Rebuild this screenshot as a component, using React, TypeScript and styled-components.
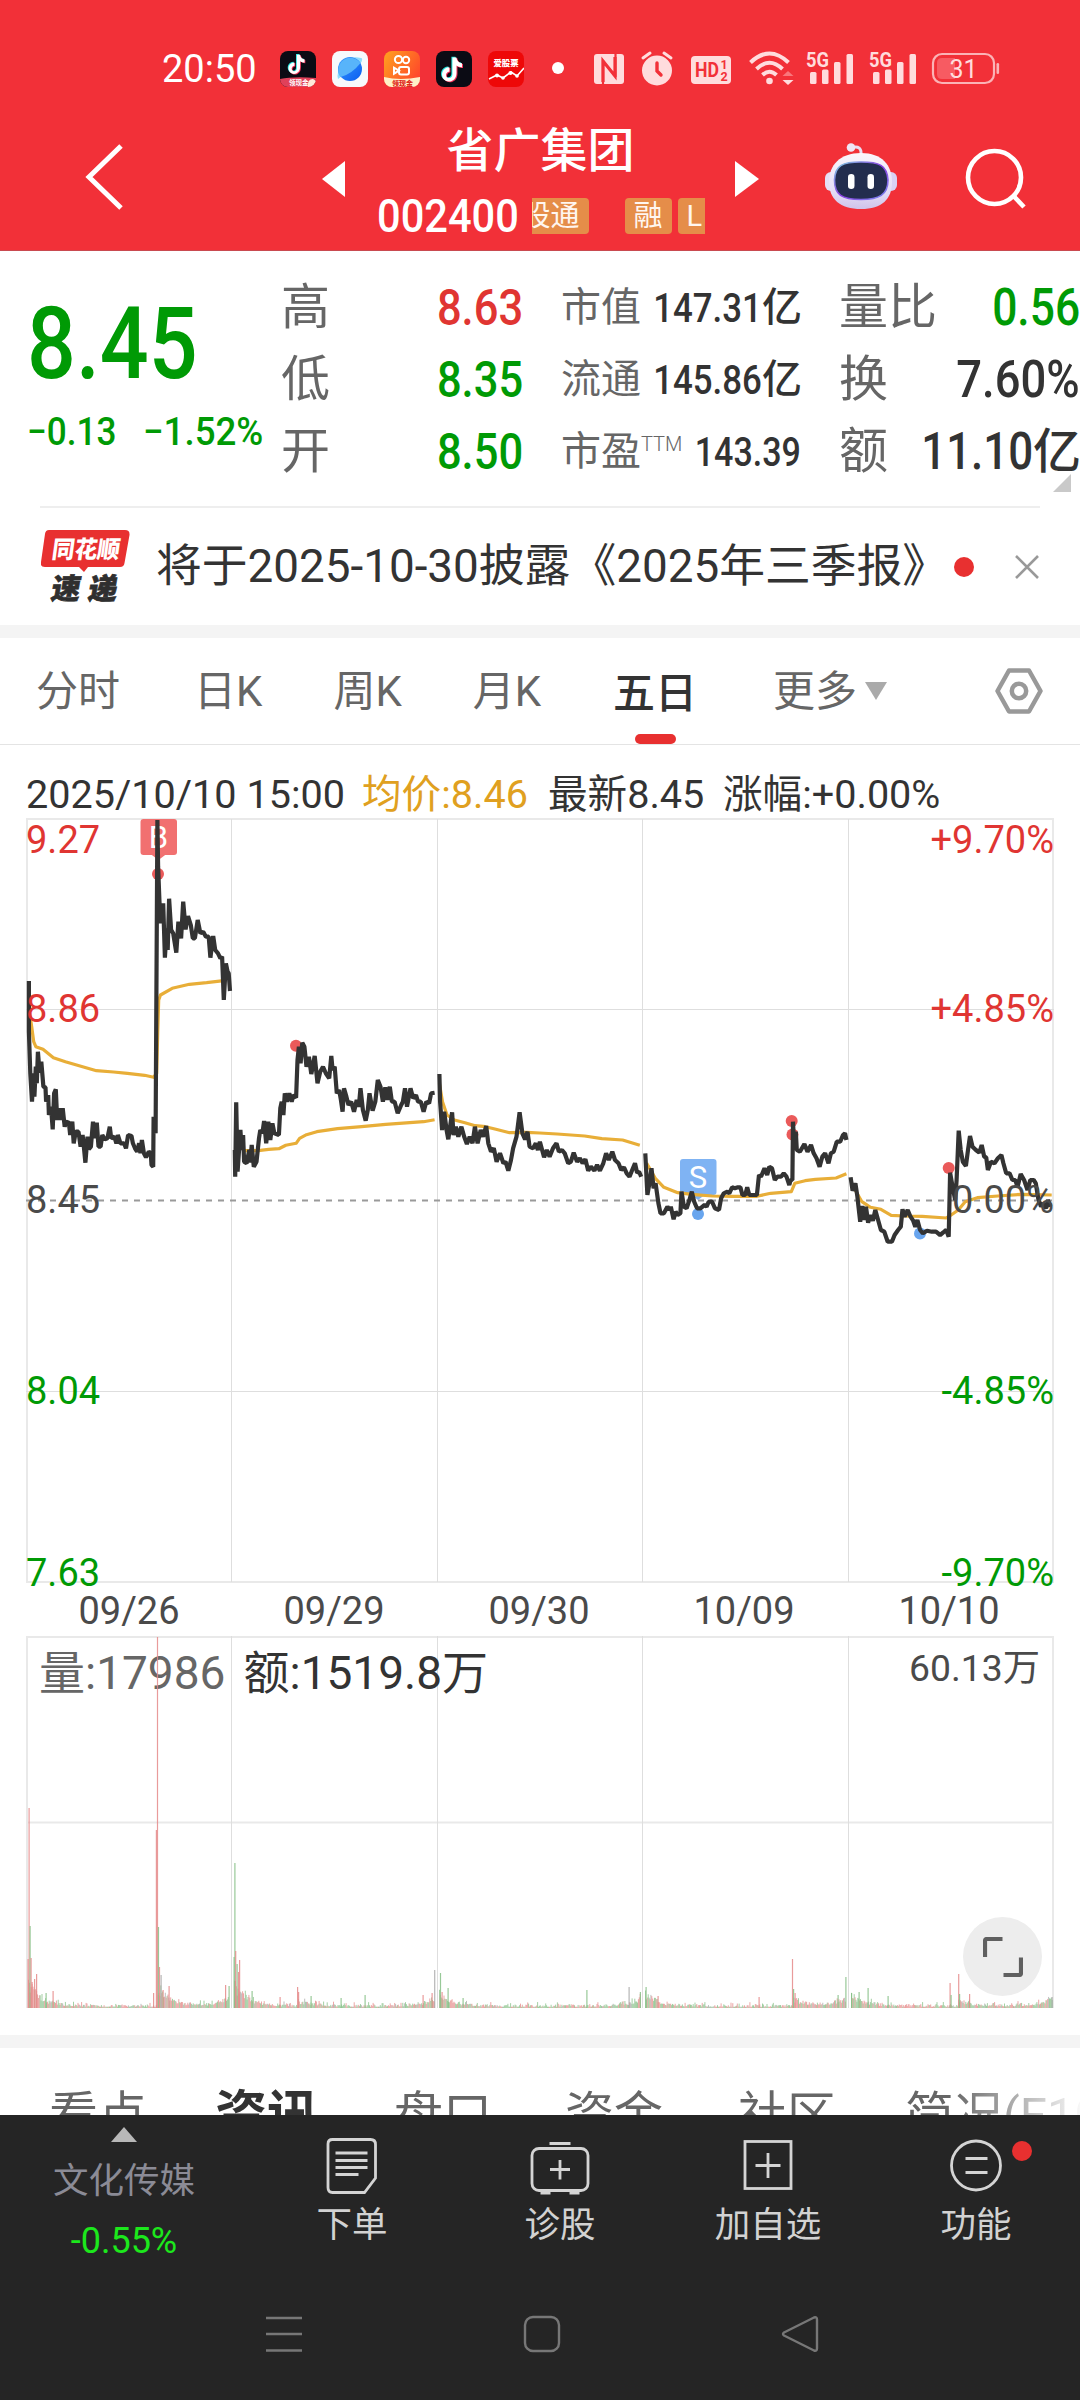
import React from "react";
import styled, { createGlobalStyle } from "styled-components";

const FONT = `Roboto, "Noto Sans CJK SC", sans-serif`;
const RED = "#f23038";
const UP = "#e03532";
const DOWN = "#009a05";
const INK = "#333333";

const Global = createGlobalStyle`
  * { box-sizing: border-box; }
  body { margin: 0; background: #fff; font-family: ${FONT}; color: ${INK}; }
  svg { display: block; flex: none; }
`;

const Screen = styled.div`
  width: 1080px;
  height: 2400px;
  overflow: hidden;
  display: flex;
  flex-direction: column;
  background: #fff;
  white-space: nowrap;
`;

/* ---------- status bar ---------- */
const StatusBar = styled.div`
  height: 100px;
  padding: 36px 0 0 162px;
  background: ${RED};
  display: flex;
  align-items: flex-start;
`;
const Clock = styled.div`
  width: 118px;
  font-size: 38px;
  line-height: 66px;
  color: #fff;
`;
const AppIcons = styled.div`
  display: flex;
  gap: 16px;
  padding-top: 15px;
  width: 272px;
`;
const SystemIcons = styled.div`
  display: flex;
  padding-top: 12px;
`;

/* ---------- title bar ---------- */
const TitleBar = styled.div`
  height: 151px;
  background: ${RED};
  border-bottom: 1px solid #c94a50;
  display: grid;
  grid-template-columns: 322px 24px 389px 24px 66px 72px 183px;
  align-items: start;
`;
const Slot = styled.div<{ $top: number; $left?: number }>`
  padding-top: ${(p) => p.$top}px;
  padding-left: ${(p) => p.$left ?? 0}px;
`;
const TitleBlock = styled.div`
  display: flex;
  flex-direction: column;
  align-items: center;
  padding-top: 18px;
`;
const StockName = styled.div`
  font-size: 47px;
  font-weight: 500;
  line-height: 66px;
  color: #fff;
`;
const CodeRow = styled.div`
  display: flex;
  align-items: center;
  height: 64px;
  width: 328px;
  gap: 15px;
`;
const StockCode = styled.div`
  width: 140px;
  color: #fff;
  font-size: 47px;
  line-height: 64px;
  font-weight: 500;
`;
const TagStrip = styled.div`
  display: flex;
  width: 173px;
  overflow: hidden;
`;
const Tag = styled.div<{ $ml?: number; $w?: number }>`
  flex: none;
  height: 36px;
  line-height: 36px;
  padding: 0 9px;
  border-radius: 4px;
  background: #e58d49;
  color: #fff6f0;
  font-size: 29px;
  margin-left: ${(p) => p.$ml ?? 0}px;
  ${(p) => (p.$w ? `width: ${p.$w}px;` : "")}
`;
const Squeeze = styled.span<{ $k: number; $right?: boolean }>`
  display: inline-block;
  transform: scaleX(${(p) => p.$k});
  transform-origin: ${(p) => (p.$right ? "100%" : "0")} 50%;
`;

/* ---------- quote panel ---------- */
const Quote = styled.div`
  height: 255px;
  display: grid;
  grid-template-columns: 281px 242px 38px 240px 38px 241px;
`;
const PriceCol = styled.div`
  padding-left: 27px;
  color: ${DOWN};
`;
const Price = styled.div`
  margin-top: 33px;
  height: 121px;
  line-height: 120px;
  font-size: 100px;
  font-weight: 500;
`;
const Change = styled.div`
  display: flex;
  height: 54px;
  line-height: 54px;
  font-size: 39px;
  font-weight: 500;
  & > div:first-child { width: 116px; }
`;
const StatCol = styled.div<{ $start: number }>`
  grid-column-start: ${(p) => p.$start};
  padding-top: 21px;
`;
const Stat = styled.div`
  height: 72px;
  line-height: 72px;
  display: flex;
  justify-content: space-between;
`;
const StatLabel = styled.div<{ $size: number }>`
  color: #666;
  font-size: ${(p) => p.$size}px;
  display: flex;
`;
const Superscript = styled.span`
  font-size: 20px;
  line-height: 56px;
  font-weight: 300;
`;
const StatValue = styled.div<{ $size: number; $color: string }>`
  width: 0;
  display: flex;
  justify-content: flex-end;
  font-size: ${(p) => p.$size}px;
  font-weight: 500;
  color: ${(p) => p.$color};
`;
const Unit = styled.span<{ $size: number }>`
  font-size: ${(p) => p.$size}px;
  margin-right: -1px;
`;
const CornerHolder = styled.div`
  display: flex;
  justify-content: flex-end;
  padding-right: 9px;
  margin-top: -14px;
`;
const Hairline = styled.div`
  height: 2px;
  margin: 0 40px;
  background: #eeeeee;
`;

/* ---------- news ---------- */
const News = styled.div`
  height: 117px;
  padding-left: 41px;
  display: flex;
  align-items: center;
`;
const NewsText = styled.div`
  width: 798px;
  padding-left: 25px;
  font-size: 45.8px;
  line-height: 60px;
`;
const Dot = styled.div<{ $size: number; $color?: string; $ml?: number }>`
  width: ${(p) => p.$size}px;
  height: ${(p) => p.$size}px;
  margin-left: ${(p) => p.$ml ?? 0}px;
  border-radius: 50%;
  background: ${(p) => p.$color ?? "#e83030"};
  flex: none;
`;
const CloseIcon = styled.svg`
  margin-left: 41px;
`;
const Band = styled.div`
  height: 13px;
  background: #f4f4f4;
  flex: none;
`;

/* ---------- period tabs ---------- */
const Tabs = styled.div`
  height: 107px;
  padding-left: 36px;
  display: flex;
  gap: 71px;
  border-bottom: 1px solid #e4e4e4;
`;
const Tab = styled.div<{ $active?: boolean; $ml?: number }>`
  height: 106px;
  line-height: 111px;
  font-size: 42px;
  margin-left: ${(p) => p.$ml ?? 0}px;
  color: ${(p) => (p.$active ? INK : "#666")};
  font-weight: ${(p) => (p.$active ? 500 : 400)};
  display: flex;
  flex-direction: ${(p) => (p.$active ? "column" : "row")};
  align-items: center;
  gap: ${(p) => (p.$active ? 0 : 8)}px;
`;
const ActiveMark = styled.div`
  width: 41px;
  height: 10px;
  border-radius: 5px;
  background: #e83030;
  margin-top: -15px;
`;

/* ---------- chart ---------- */
const InfoLine = styled.div`
  height: 74px;
  padding: 15px 0 0 26px;
  display: flex;
  font-size: 39.6px;
  line-height: 70px;
`;
const Info = styled.div<{ $w: number; $color?: string }>`
  width: ${(p) => p.$w}px;
  color: ${(p) => p.$color ?? INK};
`;
const ChartWrap = styled.div`
  position: relative;
  height: 1216px;
`;
const Plot = styled.svg`
  overflow: visible;
`;
const Expand = styled.button`
  position: absolute;
  left: 963px;
  top: 1098px;
  width: 79px;
  height: 79px;
  border: 0;
  padding: 0;
  border-radius: 50%;
  background: #ededed;
  display: grid;
  place-items: center;
`;

/* ---------- section tabs ---------- */
const Sections = styled.div`
  position: relative;
  height: 67px;
  flex: none;
  overflow: hidden;
  padding-left: 49px;
  display: flex;
  gap: 73px;
  line-height: 136px;
`;
const Section = styled.div<{ $active?: boolean; $ml?: number }>`
  margin-left: ${(p) => p.$ml ?? 0}px;
  font-size: ${(p) => (p.$active ? 52 : 49)}px;
  color: ${(p) => (p.$active ? INK : "#666")};
  font-weight: ${(p) => (p.$active ? 700 : 400)};
`;
const Fade = styled.div`
  position: absolute;
  right: 0;
  top: 0;
  width: 130px;
  height: 67px;
  background: linear-gradient(90deg, rgba(255, 255, 255, 0), rgba(255, 255, 255, 0.95));
`;

/* ---------- bottom bars ---------- */
const ActionBar = styled.div`
  height: 165px;
  flex: none;
  background: #252525;
  display: grid;
  grid-template-columns: 248px 208px 208px 208px 208px;
`;
const Sector = styled.div`
  display: flex;
  flex-direction: column;
  align-items: center;
  padding-top: 12px;
`;
const SectorName = styled.div`
  margin-top: 12px;
  font-size: 35.5px;
  line-height: 54px;
  color: #8b8b96;
`;
const SectorChange = styled.div`
  font-size: 36px;
  line-height: 66px;
  color: #1ce81c;
`;
const Action = styled.div`
  position: relative;
  display: flex;
  flex-direction: column;
  align-items: center;
  padding-top: 21px;
`;
const ActionLabel = styled.div`
  margin-top: 5px;
  font-size: 35.5px;
  line-height: 48px;
  color: #d2d2d2;
`;
const Badge = styled.div`
  position: absolute;
  left: 140px;
  top: 26px;
`;
const NavBar = styled.div`
  height: 120px;
  flex: none;
  background: #252525;
  display: flex;
  justify-content: center;
  gap: 218px;
  padding: 34px 0 0 3px;
`;

/* ---------- icons ---------- */
const NOTE = "M19.4 6.5c.5 3.3 2.4 5.4 5.6 5.8v4c-2.100.1-3.900-.6-5.500-1.700v7.400c0 9-9.700 11-13.300 5.500-2.800-4.600-.4-11.100 6.200-11.300v4.200c-4.200.4-4.500 6.300-.7 6.700 2.400.2 3.700-1.500 3.700-3.900V6.500z";

const TikTok = ({ ribbon, id }: { ribbon?: boolean; id: string }) => (
  <svg width="36" height="36" viewBox="0 0 36 36">
    <clipPath id={id}><rect width="36" height="36" rx="8" /></clipPath>
    <g clipPath={`url(#${id})`}>
      <rect width="36" height="36" fill="#0b0b14" />
      <g transform={ribbon ? "translate(4.500 -1.500) scale(.8)" : "translate(1 0)"}>
        <path d={NOTE} fill="#25e6e0" transform="translate(-1 -.8)" />
        <path d={NOTE} fill="#f23058" transform="translate(1 .8)" />
        <path d={NOTE} fill="#fff" />
      </g>
      {ribbon && (
        <>
          <path d="M0 28Q14 25 36 27V36H0Z" fill="#e0415a" />
          <path d="M28 36Q27 28 33 28L36 30V36Z" fill="#ffe9d8" />
          <text x="9" y="34" fontSize="6.500" fontWeight="700" fill="#fff">领现金</text>
        </>
      )}
    </g>
  </svg>
);
const Planet = () => (
  <svg width="36" height="36" viewBox="0 0 36 36">
    <defs>
      <linearGradient id="pl" x1="0" y1="0" x2="1" y2="1">
        <stop offset="0" stopColor="#3a9cff" /><stop offset="1" stopColor="#0a5cf0" />
      </linearGradient>
    </defs>
    <rect width="36" height="36" rx="8" fill="#f7f9fc" />
    <path d="M6 28Q4 22 10 13Q17 4 29 7Q31 7 29.500 11Z" fill="#8fdcfb" />
    <circle cx="18" cy="18" r="12" fill="url(#pl)" />
    <path d="M8.500 26A12 12 0 1 1 28.500 12Q20 23 8.500 26Z" fill="#58b4fa" />
  </svg>
);
const Kuaishou = () => (
  <svg width="36" height="36" viewBox="0 0 36 36">
    <defs>
      <linearGradient id="ks" x1="0" y1="0" x2="1" y2=".6">
        <stop offset="0" stopColor="#ffa21f" /><stop offset="1" stopColor="#ff4a2a" />
      </linearGradient>
      <clipPath id="ksc"><rect width="36" height="36" rx="8" /></clipPath>
    </defs>
    <g clipPath="url(#ksc)">
      <rect width="36" height="36" fill="url(#ks)" />
      <g fill="none" stroke="#fff" strokeWidth="2">
        <circle cx="14.500" cy="8.500" r="3.600" /><circle cx="22" cy="9" r="3.200" />
        <rect x="15" y="16" width="10" height="7.500" rx="2" /><path d="M15 19.700l-5-3v6z" />
      </g>
      <path d="M0 26Q16 30 36 26V36H0Z" fill="#fff0c8" />
      <text x="8" y="34.500" fontSize="7" fontWeight="900" fill="#e02a20">领现金</text>
    </g>
  </svg>
);
const StockApp = () => (
  <svg width="36" height="36" viewBox="0 0 36 36">
    <rect width="36" height="36" rx="8" fill="#ee0808" />
    <text x="5.500" y="15" fontSize="8.400" fontWeight="900" fill="#fff">爱股票</text>
    <path d="M1 28L9 24L15 27L23 21L29 25L36 17" fill="none" stroke="#fff" strokeWidth="1.600" />
    <g fill="#fff"><circle cx="9" cy="24.500" r="2" /><circle cx="15" cy="27" r="1.800" /><circle cx="22.500" cy="22" r="2" /><circle cx="29" cy="25" r="1.800" /></g>
  </svg>
);
const PALE = "#ffdcdd";
const Signal = ({ x }: { x: number }) => (
  <g transform={`translate(${x} 0)`}>
    <text x="-1" y="19" fontSize="20" fontWeight="700" textLength="23" lengthAdjust="spacingAndGlyphs">5G</text>
    <rect x="3" y="24" width="6.500" height="12" rx="1.500" />
    <rect x="15" y="21.500" width="6.500" height="14.500" rx="1.500" />
    <rect x="27" y="14" width="6.500" height="22" rx="1.500" />
    <rect x="39.500" y="6" width="6.500" height="30" rx="1.500" />
  </g>
);
const SystemGlyphs = () => (
  <svg width="460" height="42" viewBox="0 0 460 42" fill={PALE}>
    <circle cx="6" cy="20" r="6" fill="#fff" />
    {/* NFC */}
    <rect x="42" y="6" width="30" height="30" rx="3" />
    <g fill="none" stroke={RED} strokeWidth="3.200">
      <path d="M51 34V13L63 28V9" /><path d="M51 12V36M63.500 6V29" strokeWidth="2.200" />
    </g>
    {/* alarm */}
    <circle cx="105" cy="22.500" r="15" />
    <g fill="none" strokeLinecap="round"><path d="M91 10L98 5M119 10L112 5" stroke={PALE} strokeWidth="3" />
      <path d="M105 15V23L109 27" stroke={RED} strokeWidth="3.400" /></g>
    {/* HD */}
    <rect x="139" y="8" width="40" height="28" rx="4" />
    <g fill={RED} fontWeight="700">
      <text x="143" y="29" fontSize="21" textLength="24" lengthAdjust="spacingAndGlyphs">HD</text>
      <text x="168.500" y="20.500" fontSize="12.500">1</text><text x="168.500" y="32.500" fontSize="12.500">2</text>
    </g>
    {/* wifi */}
    <g fill="none" stroke={PALE} strokeWidth="4">
      <path d="M198.500 14.500Q217.500 -3.500 236.500 14.500" /><path d="M204.500 21Q217.500 8.500 230.500 21" /><path d="M210.500 27Q217.500 20.500 224.500 27" />
    </g>
    <circle cx="217.500" cy="33" r="3.300" />
    <path d="M230.500 28L236 23L241.500 28Z" fill="#f9767b" /><path d="M230.500 32L236 37L241.500 32Z" />
    <Signal x={255} />
    <Signal x={318} />
    <rect x="381" y="6" width="61" height="29" rx="9" fill="none" stroke="#fbb3b6" strokeWidth="2.200" />
    <path d="M390 10H403V31H390Q385 31 385 26V15Q385 10 390 10Z" fill="#f75b62" />
    <rect x="444.500" y="15" width="2.600" height="11" rx="1.300" fill="#fbb3b6" />
    <text x="411.500" y="29.500" textAnchor="middle" fontSize="25" letterSpacing="0">31</text>
  </svg>
);
const Robot = () => (
  <svg width="72" height="68" viewBox="0 0 72 68">
    <defs>
      <linearGradient id="hd" x1="0" y1="0" x2="0" y2="1"><stop offset="0" stopColor="#fbf6fb" /><stop offset=".7" stopColor="#e4dcf6" /><stop offset="1" stopColor="#cfc4ea" /></linearGradient>
      <linearGradient id="rm" x1="0" y1="0" x2="1" y2="1"><stop offset="0" stopColor="#7fd0e0" /><stop offset=".5" stopColor="#8a3fe0" /><stop offset="1" stopColor="#7b8cf0" /></linearGradient>
    </defs>
    <path d="M36 12Q37 2 27 4.500" fill="none" stroke="#e9def2" strokeWidth="3" />
    <circle cx="26" cy="4.500" r="4.300" fill="#efe6f6" />
    <rect x="0" y="29" width="14" height="19" rx="6" fill="#e5def6" /><rect x="58" y="29" width="14" height="19" rx="6" fill="#d9d2f4" />
    <path d="M36 10C57 10 67 22 67 39C67 56 57 66 36 66C15 66 4 56 4 39C4 22 15 10 36 10Z" fill="url(#hd)" />
    <path d="M36 19C54 19 62 22 63 37C63 52 54 56.500 36 56.500C17 56.500 9.500 52 9.500 37C10 22 18 19 36 19Z" fill="#232d4e" stroke="url(#rm)" strokeWidth="1.600" />
    <rect x="23" y="31" width="6.500" height="15" rx="3.200" fill="#fff" /><rect x="42.500" y="31" width="6.500" height="15" rx="3.200" fill="#fff" />
  </svg>
);
const NewsLogo = () => (
  <svg width="90" height="74" viewBox="0 0 90 74">
    <path d="M8 0H84Q89 0 88.500 5L83.500 33Q83 37 79 37H47L43 42L38 37H4Q-1 37 0 32L4 4Q4.500 0 8 0Z" fill="#e83030" />
    <g fontWeight="900">
      <text transform="translate(10 28) skewX(-8)" fontSize="24" fill="#fff" textLength="68" lengthAdjust="spacingAndGlyphs">同花顺</text>
      <text transform="translate(9 68.500) skewX(-10)" fontSize="29" fill="#2f2f2f" stroke="#2f2f2f" strokeWidth=".7" textLength="66">速递</text>
    </g>
  </svg>
);

/* ---------- chart data ---------- */
// Plot samples use a fine grid: 2.904 units per pixel across, 3 down.
type Trace = { ox: number; oy: number; d: string };
const PRICE: Trace[] = [
  { ox: 0, oy: 0, d: "84,543 84,695 88,820 93,905 97,820 100,890 104,800 107,850 110,755 115,818 120,785 126,860 132,862 134,905 140,885 142,945 148,920 153,988 157,880 162,868 166,960 172,925 178,960 182,925 188,980 192,965 200,968 204,1005 210,965 214,1030 220,995 228,995 234,1040 240,1005 244,1045 248,1088 254,1010 258,1048 264,1040 270,965 275,1015 281,968 286,1040 292,1040 297,1005 304,1018 312,1015 319,980 323,1015 332,1010 338,1030 342,1005 350,1030 360,1030 366,1045 372,1005 382,1008 386,1030 392,1045 398,1055 404,1030 408,1060 412,1020 418,1060 424,1072 432,1055 438,1060 440,1095 445,1100 446,950 452,1000 457,60 459,200 463,300 466,370 474,310 479,473 484,385 487,450 491,296 497,390 503,400 512,458 518,365 526,415 532,305 539,388 546,348 554,375 560,415 566,415 574,360 582,400 590,395 598,410 606,410 611,473 619,408 625,450 633,460 640,475 645,470 650,600 656,490 661,515 664,520 668,573" },
  { ox: 0, oy: 0, d: "682,1050 683,1130 686,907 690,1115 698,990 702,1050 706,1005 709,1085 716,1090 724,1050 727,1088 731,1035 737,1100 745,1085 752,1015 756,990 762,1000 767,963 773,1030 779,965 785,1020 791,970 797,1000 810,1005 814,925 818,905 823,945 827,880 833,905 840,880 847,905 852,885 860,893 864,780 868,740 873,790 878,728 884,740 890,800 897,770 904,822 914,768 922,850 930,815 938,800 946,820 956,835 962,768 966,810 972,800 978,880 985,870 990,900 995,935 999,865 1006,890 1012,915 1020,905 1028,935 1036,900 1042,920 1047,865 1054,930 1062,962 1068,930 1073,880 1082,932 1090,905 1097,840 1105,860 1112,905 1119,862 1125,900 1132,860 1138,905 1146,905 1155,940 1165,915 1170,905 1176,865 1182,920 1192,865 1200,895 1208,885 1214,905 1222,905 1230,935 1238,905 1246,910 1252,880 1262,878" },
  { ox: 0, oy: 0, d: "1276,822 1278,905 1284,990 1290,935 1297,990 1302,1018 1313,937 1317,1005 1324,980 1331,1010 1340,980 1348,1010 1356,1032 1364,1010 1372,1030 1379,980 1387,1030 1396,990 1403,1010 1412,978 1418,1030 1426,1055 1434,1045 1442,1085 1452,1060 1462,1090 1468,1085 1476,1112 1484,1080 1490,1045 1500,1010 1509,937 1517,1000 1525,1018 1532,995 1538,1040 1548,1045 1556,1030 1562,1050 1568,1025 1580,1072 1588,1050 1596,1070 1606,1045 1616,1030 1623,1055 1632,1050 1640,1060 1650,1090 1658,1085 1666,1058 1676,1085 1684,1075 1692,1090 1700,1078 1708,1112 1716,1100 1726,1112 1734,1095 1742,1112 1752,1090 1760,1060 1768,1080 1778,1055 1786,1080 1796,1090 1804,1110 1812,1102 1820,1120 1828,1130 1836,1110 1844,1090 1850,1118 1856,1115 1862,1130" },
  { ox: 1568, oy: 450, d: "306,610 312,735 318,700 324,655 330,715 336,700 344,760 350,790 360,790 370,770 376,780 380,770 388,808 394,785 400,795 408,790 411,725 418,770 426,775 434,750 441,725 448,755 456,775 466,775 478,765 484,770 490,755 500,755 508,775 520,780 526,745 534,730 544,725 550,730 558,712 566,715 575,712 582,712 588,735 596,735 602,712 608,735 620,735 630,735 636,675 642,680 652,655 660,675 666,650 674,655 682,690 690,680 700,680 708,670 716,680 724,705 728,690 733,690 735,515 739,600 743,545 746,600 755,605 768,582 777,605 787,585 795,610 803,625 812,650 820,620 828,610 838,640 845,610 853,605 862,575 872,575 880,555 886,550 890,570" },
  { ox: 1568, oy: 450, d: "902,682 908,722 916,700 922,740 925,770 930,815 936,768 940,810 947,770 953,818 960,795 967,812 974,780 982,810 990,840 1000,845 1010,875 1022,875 1030,855 1040,840 1048,830 1053,778 1059,800 1068,780 1076,800 1084,812 1090,830 1096,810 1104,840 1112,850 1124,842 1138,845 1150,845 1162,855 1174,845 1180,840 1187,860 1191,668 1195,690 1200,720 1206,750 1210,690 1216,542 1222,600 1228,635 1237,648 1243,600 1249,558 1256,590 1266,600 1276,608 1283,585 1290,620 1296,622 1301,660 1310,635 1320,640 1330,625 1340,615 1346,640 1354,670 1364,670 1372,690 1380,690 1387,710 1396,672 1406,690 1416,720 1424,690 1434,690 1440,700 1447,745 1455,770 1460,760 1470,775 1475,750 1482,770" },
];
const AVERAGE: Trace[] = [
  { ox: 0, oy: 0, d: "86,640 92,680 98,725 104,740 125,748 155,773 190,785 240,800 280,812 330,816 370,820 420,826 446,832 455,820 458,700 461,600 466,585 500,565 550,553 600,548 650,542" },
  { ox: 0, oy: 0, d: "706,1052 750,1052 780,1048 810,1046 830,1036 860,1030 870,1015 890,1004 920,995 980,986 1050,980 1120,973 1200,967 1230,965 1262,959" },
  { ox: 0, oy: 0, d: "1276,850 1285,905 1298,945 1320,960 1350,968 1380,977 1410,980 1440,988 1480,998 1530,997 1568,999 1618,1002 1698,1008 1748,1016 1808,1020 1858,1036" },
  { ox: 1568, oy: 450, d: "310,640 335,685 360,712 400,728 440,733 500,738 560,739 630,739 670,730 730,725 740,700 770,692 800,688 860,684 890,671" },
  { ox: 1568, oy: 450, d: "910,710 935,755 960,772 990,778 1020,796 1060,798 1110,799 1180,804 1190,798 1215,780 1235,755 1270,743 1330,738 1400,733 1486,735" },
];
const TOP = 819; // page y of the plot's upper edge
const toPoints = (t: Trace) =>
  t.d.split(" ").map((p) => {
    const [x, y] = p.split(",").map(Number);
    return `${((x + t.ox) / 2.904).toFixed(1)},${((y + t.oy) / 3 + 800 - TOP).toFixed(1)}`;
  }).join(" ");

const R = "#e58a8a", G = "#86bf86", N = "#a8a8a8";
type Bar = [number, number, string];
const SPIKES: Bar[] = [
  [28, 49, R], [29, 200, R], [30, 82, G], [31, 50, R], [32, 26, R], [34.5, 29, R], [36.5, 34, R], [46, 15, G], [53, 17, R],
  [153.5, 15, R], [156.3, 178, R], [157.4, 371, R], [158.4, 81, G], [159.4, 41, R], [161, 33, N], [163, 18, R], [169, 22, R],
  [225.5, 23, R], [229, 22, G],
  [234, 51, G], [234.8, 145, G], [235.6, 57, R], [237, 44, G], [238.4, 36, R], [239.5, 48, R], [252, 17, G], [297.5, 21, R], [298.5, 16, R],
  [311, 12, G], [341, 10, G], [365, 13, G], [280, 11, R], [423, 13, R], [432, 15, R], [434.6, 38, N],
  [440.4, 35, G], [442, 16, R], [448, 20, G], [463, 10, G],
  [586.8, 18, G], [629, 21, N], [640.3, 16, G], [646, 21, G], [658, 12, R], [759, 11, R],
  [792.4, 49, R], [793.5, 19, G], [795, 15, R], [838, 13, G], [845.8, 31, G],
  [851.5, 15, G], [859, 16, G], [868, 20, G], [888, 12, G], [950, 25, R], [951, 13, G], [958.6, 34, R], [959.5, 14, G], [969.5, 14, R], [1052, 11, N],
];
const noise = (n: number) => {
  const v = Math.sin(n * 127.1 + 11.7) * 43758.5453;
  return v - Math.floor(v);
};
const DAYS = [
  { x0: 28, x1: 228, a: 26, jump: 157, jh: 20 },
  { x0: 234, x1: 434, a: 26, jump: 297, jh: 6 },
  { x0: 439, x1: 640, a: 13, jump: 600, jh: 0 },
  { x0: 645, x1: 845, a: 14, jump: 793, jh: 8 },
  { x0: 851, x1: 1052, a: 14, jump: 958, jh: 6 },
];
const BARS: Bar[] = DAYS.flatMap((d) => {
  const out: Bar[] = [];
  for (let x = d.x0; x < d.x1; x += 0.9) {
    const open = d.a * Math.exp(-(x - d.x0) / 13);
    const jump = x > d.jump ? d.jh * Math.exp(-(x - d.jump) / 14) : 0;
    const close = 9 * Math.exp(-(d.x1 - x) / 12);
    const h = 1.2 + (open + jump + close) * (0.5 + 0.7 * noise(x)) + 3.5 * Math.pow(noise(x * 3.3), 5) + (noise(x * 1.7) > 0.6 && x > d.x0 + 4 ? 1.5 : 0);
    const c = noise(x * 7.1);
    out.push([x, h, c > 0.52 ? G : c > 0.08 ? R : N]);
  }
  return out;
});

const V_LINES = [231.5, 437.5, 642.5, 848.5];
const V0 = 818; // upper edge of the volume plot
const V_BASE = 1189;

const Pin = ({ x, y, fill, label }: { x: number; y: number; fill: string; label: string }) => (
  <g>
    <path d={`M${x + 10} ${y + 35}L${x + 18} ${y + 41}L${x + 26} ${y + 35}Z`} fill={fill} />
    <rect x={x} y={y} width="36.500" height="36" rx="3" fill={fill} />
    <text x={x + 18} y={y + 29} fontSize="31" fill="#fff" textAnchor="middle">{label}</text>
  </g>
);

const Chart = () => (
  <Plot width="1080" height="1200" viewBox="0 0 1080 1200" fontFamily={FONT}>
    <g stroke="#e9e9e9" strokeWidth="2" fill="none">
      <rect x="27" y="0" width="1026" height="763" />
      <path d={`M26 ${V0}H1054M26 1003.500H1054M27 ${V0}V${V_BASE}M1053 ${V0}V${V_BASE}`} />
    </g>
    <g stroke="#dedede" strokeWidth="1">
      <path d="M26 190.500H1054M26 572.500H1054" />
      {V_LINES.map((x) => <path key={x} d={`M${x} 0V763M${x} ${V0 - 1}V${V_BASE}`} />)}
    </g>
    <path d="M26 381.500H1054" stroke="#9a9a9a" strokeWidth="2" strokeDasharray="6 6" />

    <Pin x={140.5} y={0} fill="#f17070" label="B" />
    <Pin x={680} y={340} fill="#7fb3f3" label="S" />
    <g fill="#ea5a5a">
      <circle cx="158" cy="55" r="6" /><circle cx="296" cy="226.700" r="6" /><circle cx="791.700" cy="302" r="6" /><circle cx="792.500" cy="315.500" r="6" /><circle cx="948.700" cy="349" r="6" />
    </g>
    <g fill="#68a5ee"><circle cx="698" cy="395" r="6" /><circle cx="920" cy="414.500" r="6" /></g>

    {AVERAGE.map((t, i) => <polyline key={i} points={toPoints(t)} fill="none" stroke="#e8ae38" strokeWidth="3.200" strokeLinejoin="round" />)}
    {PRICE.map((t, i) => <polyline key={i} points={toPoints(t)} fill="none" stroke="#333" strokeWidth="4.200" strokeLinejoin="bevel" />)}

    <g fontSize="38" fill={UP}>
      <text x="26" y="34">9.27</text><text x="26" y="202.500">8.86</text>
      <text x="1054" y="34" textAnchor="end">+9.70%</text><text x="1054" y="202.500" textAnchor="end">+4.85%</text>
    </g>
    <g fontSize="38" fill="#4a4a4a">
      <text x="26" y="393.500">8.45</text><text x="1054" y="393.500" textAnchor="end">0.00%</text>
      {["09/26", "09/29", "09/30", "10/09", "10/10"].map((d, i) => (
        <text key={d} x={129 + i * 205} y="805" textAnchor="middle">{d}</text>
      ))}
      <text x="1040" y="862" textAnchor="end" fontSize="37.300">60.13万</text>
    </g>
    <g fontSize="38" fill={DOWN}>
      <text x="26" y="585">8.04</text><text x="26" y="766.500">7.63</text>
      <text x="1054" y="585" textAnchor="end">-4.85%</text><text x="1054" y="766.500" textAnchor="end">-9.70%</text>
    </g>
    <g fontSize="46">
      <text x="39" y="869.500" fill="#666">量:17986</text><text x="243.500" y="869.500" fill={INK}>额:1519.8万</text>
    </g>
    <g>
      {BARS.map(([x, h, c], i) => <rect key={i} x={x} y={V_BASE - h} width="1" height={h} fill={c} opacity=".75" />)}
      {SPIKES.map(([x, h, c], i) => <rect key={`s${i}`} x={x - 0.5} y={V_BASE - h} width="1.200" height={h} fill={c} opacity=".85" />)}
    </g>
  </Plot>
);

const LINE = "#d4d4d4";
const ACTIONS = [
  { label: "下单", icon: <><path d="M8 3.500H46Q51 3.500 51 8.500V42L40 56.500H8Q3.500 56.500 3.500 51.500V8Q3.500 3.500 8 3.500Z" /><path d="M11 17H43M11 24.500H43M11 31.500H43M11 38.500H34" /></> },
  { label: "诊股", icon: <><rect x="-.5" y="12.500" width="56" height="42" rx="7" /><path d="M17 7.500H38M8 57H18M37 57H47M17.500 33.500H37.500M27.500 24V43.500" /></> },
  { label: "加自选", icon: <><rect x="4.500" y="5.500" width="46" height="47" /><path d="M15 29.500H40M27.500 17V42" /></> },
  { label: "功能", icon: <><circle cx="27.500" cy="29.500" r="24.500" /><path d="M17 22.500H39M17 36.500H39" /></>, badge: true },
];

type Cell = { label: string; sup?: string; value: string; k: number; unit?: string; color: string };
const COLUMNS: { start: number; labelSize: number; size: number; unitSize: number; cells: Cell[] }[] = [
  { start: 2, labelSize: 49, size: 50, unitSize: 0, cells: [
    { label: "高", value: "8.63", k: 0.87, color: UP },
    { label: "低", value: "8.35", k: 0.87, color: DOWN },
    { label: "开", value: "8.50", k: 0.87, color: DOWN },
  ] },
  { start: 4, labelSize: 40, size: 41, unitSize: 40, cells: [
    { label: "市值", value: "147.31", k: 0.85, unit: "亿", color: INK },
    { label: "流通", value: "145.86", k: 0.85, unit: "亿", color: INK },
    { label: "市盈", sup: "TTM", value: "143.39", k: 0.83, color: INK },
  ] },
  { start: 6, labelSize: 49, size: 51, unitSize: 48, cells: [
    { label: "量比", value: "0.56", k: 0.87, color: DOWN },
    { label: "换", value: "7.60%", k: 0.89, color: INK },
    { label: "额", value: "11.10", k: 0.86, unit: "亿", color: INK },
  ] },
];

export default function App() {
  return (
    <Screen>
      <Global />
      <StatusBar>
        <Clock>20:50</Clock>
        <AppIcons><TikTok id="t1" ribbon /><Planet /><Kuaishou /><TikTok id="t2" /><StockApp /></AppIcons>
        <SystemIcons><SystemGlyphs /></SystemIcons>
      </StatusBar>
      <TitleBar>
        <Slot $top={44} $left={84}>
          <svg width="42" height="66" viewBox="0 0 42 66"><path d="M37 2L5 33L37 64" fill="none" stroke="#fff" strokeWidth="5" /></svg>
        </Slot>
        <Slot $top={61}><svg width="24" height="36"><path d="M0 18L23 0V36Z" fill="#fff" /></svg></Slot>
        <TitleBlock>
          <StockName>省广集团</StockName>
          <CodeRow>
            <StockCode><Squeeze $k={0.885}>002400</Squeeze></StockCode>
            <TagStrip><Tag $ml={-19}>股通</Tag><Tag $ml={36} $w={47}>融</Tag><Tag $ml={6} $w={40}>L</Tag></TagStrip>
          </CodeRow>
        </TitleBlock>
        <Slot $top={61}><svg width="24" height="36"><path d="M24 18L0 0V36Z" fill="#fff" /></svg></Slot>
        <span />
        <Slot $top={43}><Robot /></Slot>
        <Slot $top={46} $left={67}>
          <svg width="64" height="64" viewBox="0 0 64 64" fill="none" stroke="#fff" strokeWidth="4.600"><circle cx="30.500" cy="31.500" r="26.500" /><path d="M50 50.500L60 61" /></svg>
        </Slot>
      </TitleBar>

      <Quote>
        <PriceCol>
          <Price><Squeeze $k={0.86}>8.45</Squeeze></Price>
          <Change><div><Squeeze $k={0.9}>−0.13</Squeeze></div><div><Squeeze $k={0.94}>−1.52%</Squeeze></div></Change>
        </PriceCol>
        {COLUMNS.map((col) => (
          <StatCol key={col.start} $start={col.start}>
            {col.cells.map((c) => (
              <Stat key={c.label}>
                <StatLabel $size={col.labelSize}>{c.label}{c.sup && <Superscript>{c.sup}</Superscript>}</StatLabel>
                <StatValue $size={col.size} $color={c.color}>
                  <Squeeze $k={c.k} $right>{c.value}</Squeeze>
                  {c.unit && <Unit $size={col.unitSize}>{c.unit}</Unit>}
                </StatValue>
              </Stat>
            ))}
            {col.start === 6 && <CornerHolder><svg width="18" height="18"><path d="M18 0V18H0Z" fill="#c9c9c9" /></svg></CornerHolder>}
          </StatCol>
        ))}
      </Quote>
      <Hairline />
      <News>
        <NewsLogo />
        <NewsText>将于2025-10-30披露《2025年三季报》</NewsText>
        <Dot $size={20} $ml={25} />
        <CloseIcon width="24" height="24" viewBox="0 0 24 24"><path d="M1 1L23 23M23 1L1 23" stroke="#999" strokeWidth="2.600" /></CloseIcon>
      </News>
      <Band />
      <Tabs>
        <Tab>分时</Tab><Tab $ml={3}>日K</Tab><Tab>周K</Tab><Tab>月K</Tab>
        <Tab $active $ml={1}>五日<ActiveMark /></Tab>
        <Tab $ml={5}>更多<svg width="22" height="18"><path d="M0 0H22L11 18Z" fill="#aaa" /></svg></Tab>
        <Tab $ml={37}>
          <svg width="48" height="46" viewBox="0 0 48 46" fill="none" stroke="#999" strokeWidth="4.500" strokeLinejoin="round"><path d="M14 2.500H34L45.500 23L34 43.500H14L2.500 23Z" /><circle cx="24" cy="23" r="7.200" /></svg>
        </Tab>
      </Tabs>
      <InfoLine>
        <Info $w={336}>2025/10/10 15:00</Info>
        <Info $w={186} $color="#e0a020">均价:8.46</Info>
        <Info $w={175}>最新8.45</Info>
        <Info $w={230}>涨幅:+0.00%</Info>
      </InfoLine>
      <ChartWrap>
        <Chart />
        <Expand aria-label="expand">
          <svg width="40" height="40" viewBox="0 0 40 40" fill="none" stroke="#606060" strokeWidth="4.200"><path d="M2 20V4Q2 2 4 2H19.500M38 20.500V36Q38 38 36 38H20.500" /></svg>
        </Expand>
      </ChartWrap>
      <Band />
      <Sections>
        <Section>看点</Section><Section $active $ml={-5}>资讯</Section><Section $ml={2}>盘口</Section>
        <Section>资金</Section><Section $ml={2}>社区</Section><Section $ml={-4}>简况(F10)</Section>
        <Fade />
      </Sections>
      <ActionBar>
        <Sector>
          <svg width="26" height="15"><path d="M13 0L26 15H0Z" fill="#b8b8b8" /></svg>
          <SectorName>文化传媒</SectorName>
          <SectorChange>-0.55%</SectorChange>
        </Sector>
        {ACTIONS.map((a) => (
          <Action key={a.label}>
            <svg width="60" height="60" viewBox="-2.500 0 60 60" fill="none" stroke={LINE} strokeWidth="2.800">{a.icon}</svg>
            <ActionLabel>{a.label}</ActionLabel>
            {a.badge && <Badge><Dot $size={20} /></Badge>}
          </Action>
        ))}
      </ActionBar>
      <NavBar>
        <svg width="40" height="40" fill="none" stroke="#777" strokeWidth="2.600"><path d="M2 4H38M2 20H38M2 36.500H38" /></svg>
        <svg width="40" height="40" fill="none" stroke="#777" strokeWidth="2.400"><rect x="3" y="3" width="34" height="34" rx="8" /></svg>
        <svg width="40" height="40" fill="none" stroke="#777" strokeWidth="2.400" strokeLinejoin="round"><path d="M4 18.500Q2 20 4 21.500L34 36.500Q37 37.500 37 34.500V5.500Q37 2.500 34 3.500Z" /></svg>
      </NavBar>
    </Screen>
  );
}
